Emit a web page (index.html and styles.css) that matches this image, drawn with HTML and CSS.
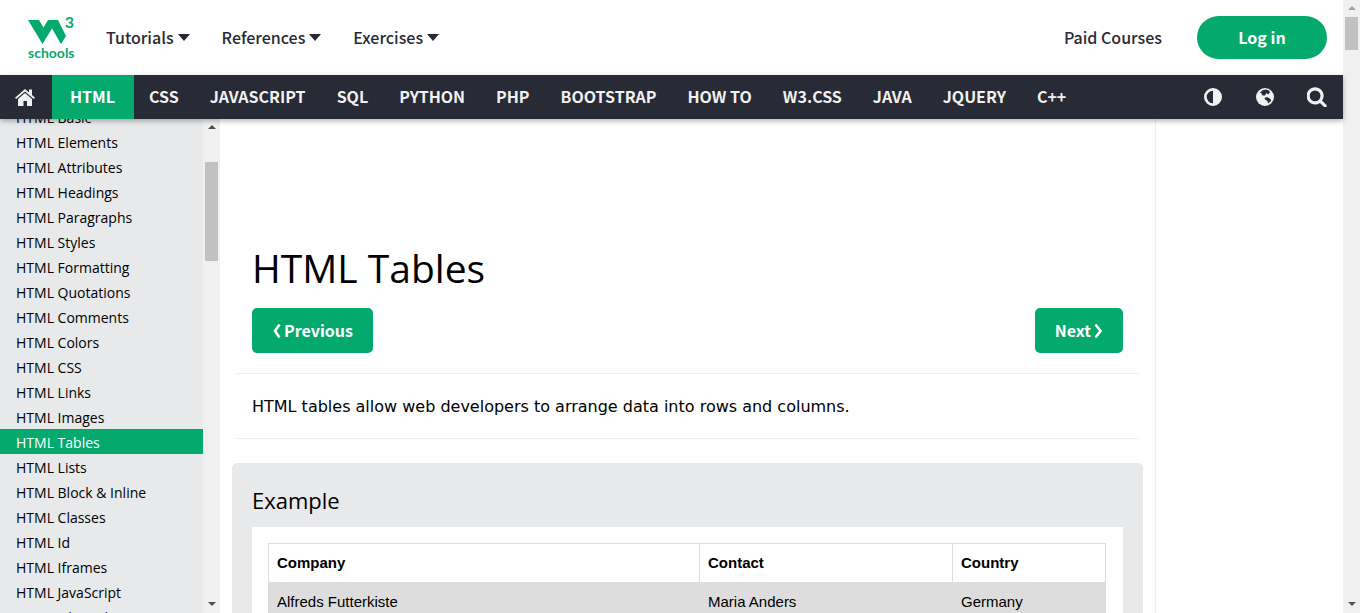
FILE: index.html
```
<!DOCTYPE html>
<html lang="en">
<head>
<meta charset="utf-8">
<title>HTML Tables</title>
<meta name="viewport" content="width=device-width, initial-scale=1">
<link rel="stylesheet" href="styles.css">
</head>
<body>
<div class="window">
<div class="page">
  <header class="top">
    <a class="logo" href="#" aria-label="W3Schools home">
      <svg class="logo-mark" viewBox="0 0 38 24" aria-hidden="true">
        <path d="M0 0H11L15.500 7.500L20 0H30L38 16L33 24L24 8.500L14.500 24Z"/>
      </svg>
      <span class="logo-three">3</span>
      <span class="logo-word">schools</span>
    </a>
    <nav class="menus" aria-label="Site">
      <a href="#">Tutorials<span class="caret"></span></a>
      <a href="#">References<span class="caret"></span></a>
      <a href="#">Exercises<span class="caret"></span></a>
    </nav>
    <a class="paid" href="#">Paid Courses</a>
    <button class="login" type="button">Log in</button>
  </header>

  <nav class="topics" aria-label="Topics">
    <a class="home" href="#" aria-label="Home">
      <svg class="icon-home" viewBox="0 0 20 17" aria-hidden="true"><path d="M10 4L17 10V17H12V12H8.500V17H3V10Z"/><path d="M10 0L14 3.500V0.500H17V6L20 8.800L18.800 10L10 2.500L1.200 10L0 8.800Z"/></svg>
    </a>
    <a class="active" href="#">HTML</a>
    <a href="#">CSS</a>
    <a href="#">JAVASCRIPT</a>
    <a href="#">SQL</a>
    <a href="#">PYTHON</a>
    <a href="#">PHP</a>
    <a href="#">BOOTSTRAP</a>
    <a href="#">HOW TO</a>
    <a href="#">W3.CSS</a>
    <a href="#">JAVA</a>
    <a href="#">JQUERY</a>
    <a href="#">C++</a>
    <div class="tools">
      <button type="button" aria-label="Dark mode"><svg viewBox="0 0 20 20" aria-hidden="true"><path fill-rule="evenodd" d="M10 1A9 9 0 1 0 10 19A9 9 0 1 0 10 1ZM10 3.700V16.300A6.300 6.300 0 0 1 10 3.700Z"/></svg></button>
      <button type="button" aria-label="Translate"><svg viewBox="0 0 20 20" aria-hidden="true"><circle cx="10" cy="10" r="9"/><path class="land" d="M5 5.500L8 3L11 2.500L14 3.500L15 5.500L13 7.500L11.500 6L10 8.500L7.500 8.500L6.500 6.500ZM9.500 11L12 10L15.500 12L16 14L13 16.500L12.500 14L10 12.500Z"/></svg></button>
      <button type="button" aria-label="Search"><svg viewBox="100 100 1650 1650" aria-hidden="true"><path d="M1216 832q0-185-131.500-316.500t-316.500-131.500-316.500 131.500-131.500 316.500 131.500 316.500 316.500 131.500 316.500-131.500 131.500-316.500zm512 832q0 52-38 90t-90 38q-54 0-90-38l-343-342q-179 124-399 124-143 0-273.500-55.500t-225-150-150-225-55.500-273.500 55.500-273.500 150-225 225-150 273.500-55.500 273.500 55.500 225 150 150 225 55.500 273.500q0 220-124 399l343 343q37 37 37 90z"/></svg></button>
    </div>
  </nav>

  <div class="body">
    <aside class="side">
      <nav class="chapters" aria-label="Chapters">
        <a href="#">HTML Basic</a>
        <a href="#">HTML Elements</a>
        <a href="#">HTML Attributes</a>
        <a href="#">HTML Headings</a>
        <a href="#">HTML Paragraphs</a>
        <a href="#">HTML Styles</a>
        <a href="#">HTML Formatting</a>
        <a href="#">HTML Quotations</a>
        <a href="#">HTML Comments</a>
        <a href="#">HTML Colors</a>
        <a href="#">HTML CSS</a>
        <a href="#">HTML Links</a>
        <a href="#">HTML Images</a>
        <a class="current" href="#" aria-current="page">HTML Tables</a>
        <a href="#">HTML Lists</a>
        <a href="#">HTML Block &amp; Inline</a>
        <a href="#">HTML Classes</a>
        <a href="#">HTML Id</a>
        <a href="#">HTML Iframes</a>
        <a href="#">HTML JavaScript</a>
        <a href="#">HTML File Paths</a>
      </nav>
      <div class="scrollbar" aria-hidden="true"><span class="up"></span><span class="thumb tall"></span><span class="down"></span></div>
    </aside>

    <main class="content">
      <h1>HTML Tables</h1>
      <div class="pager">
        <a class="btn" href="#"><svg viewBox="0 0 8 14" aria-hidden="true"><path d="M7 0.500L2.500 7L7 13.500"/></svg><span>Previous</span></a>
        <a class="btn" href="#"><span>Next</span><svg viewBox="0 0 8 14" aria-hidden="true"><path d="M1 0.500L6 7L1 13.500"/></svg></a>
      </div>
      <hr>
      <p>HTML tables allow web developers to arrange data into rows and columns.</p>
      <hr>
      <section class="example">
        <h2>Example</h2>
        <div class="sheet">
          <table>
            <colgroup><col class="c1"><col class="c2"><col class="c3"></colgroup>
            <thead><tr><th>Company</th><th>Contact</th><th>Country</th></tr></thead>
            <tbody><tr><td>Alfreds Futterkiste</td><td>Maria Anders</td><td>Germany</td></tr></tbody>
          </table>
        </div>
      </section>
    </main>
    <aside class="rail"></aside>
  </div>
</div>
<div class="scrollbar" aria-hidden="true"><span class="up muted"></span><span class="thumb"></span><span class="down"></span></div>
</div>
</body>
</html>
```
FILE: styles.css
```
* { box-sizing: border-box; }
body { margin: 0; background: #fff; color: #000; font-family: "Open Sans", sans-serif; }
a { color: inherit; text-decoration: none; }
button { border: 0; padding: 0; background: none; color: inherit; font: inherit; cursor: pointer; }

.window { display: flex; height: 100vh; overflow: hidden; }
.page { flex: 1; min-width: 0; display: flex; flex-direction: column; }

.top {
  display: flex; align-items: center; flex: none; height: 75px; padding: 0 16px 0 28px;
  color: #282a35; font: 500 16px/24px "Noto Sans CJK SC", sans-serif;
}
.logo { position: relative; width: 46px; height: 44px; color: #04aa6d; font-family: Lato, sans-serif; }
.logo-mark { display: block; width: 38px; height: 24px; margin-top: 4px; fill: #04aa6d; }
.logo-three { position: absolute; top: -3px; right: 0; font-size: 16px; font-weight: 700; line-height: 18px; }
.logo-word { display: block; font-size: 14px; font-weight: 700; line-height: 18px; }
.menus { display: flex; gap: 32px; margin-left: 32px; padding-bottom: 2px; }
.menus a { display: flex; align-items: center; gap: 4px; }
.caret { margin-top: 2px; border: 6px solid transparent; border-top: 7px solid #282a35; border-bottom: 0; }
.paid { margin-left: auto; padding-bottom: 2px; }
.login {
  width: 130px; height: 43px; margin-left: 35px; padding-bottom: 2px; border-radius: 22px;
  background: #04aa6d; color: #fff; font-weight: 700;
}

.topics {
  position: relative; z-index: 1; display: flex; flex: none; height: 44px;
  background: #282a35; color: #f1f1f1; box-shadow: 0 2px 5px rgba(0, 0, 0, .3);
  font: 700 16px/42px "Noto Sans CJK SC", sans-serif;
}
.topics a { padding: 0 16px 0 15px; }
.topics .home { display: flex; align-items: center; width: 52px; }
.topics .active { padding: 0 19px 0 18px; background: #04aa6d; color: #fff; }
.icon-home { width: 20px; height: 17px; fill: currentColor; }
.tools { display: flex; gap: 32px; margin-left: auto; padding-right: 16px; }
.tools button { display: flex; align-items: center; }
.tools svg { width: 20px; height: 20px; fill: currentColor; }
.tools .land { fill: #282a35; }

.body { display: flex; flex: 1; min-height: 0; }
.side { display: flex; flex: none; width: 220px; background: #e7e9eb; }
.chapters { display: flex; flex: 1; flex-direction: column; justify-content: flex-end; overflow: hidden; margin-bottom: -16px; font-size: 14px; line-height: 27px; }
.chapters a { flex: none; height: 25px; padding-left: 16px; }
.chapters .current { background: #04aa6d; color: #fff; }

.scrollbar { display: flex; flex: none; flex-direction: column; align-items: center; width: 17px; background: #f0f0f0; }
.scrollbar .up { margin: 6px 0 7px; border: 4px solid transparent; border-bottom-color: #505050; border-top: 0; }
.scrollbar .up.muted { border-bottom-color: #a3a3a3; }
.scrollbar .down { margin: auto 0 7px; border: 4px solid transparent; border-top-color: #505050; border-bottom: 0; }
.thumb { width: 13px; height: 33px; background: #c1c1c1; }
.thumb.tall { height: 99px; margin-top: 26px; }

.content { flex: 1; min-width: 0; padding: 117px 16px 0; overflow: hidden; }
h1 { margin: 0 16px; font-size: 39px; font-weight: 400; line-height: 63px; }
.pager { display: flex; justify-content: space-between; margin: 9px 16px 20px; }
.btn {
  display: flex; align-items: center; gap: 3px; height: 45px; padding: 0 20px; border-radius: 5px;
  background: #04aa6d; color: #fff; font: 700 16px/24px "Noto Sans CJK SC", sans-serif;
}
.btn span { padding-bottom: 2px; }
.btn svg { width: 9px; height: 14px; fill: none; stroke: #fff; stroke-width: 2.500; }
hr { height: 1px; margin: 0; border: 0; background: #eee; }
p { margin: 21px 16px 19px; font: 16px/24px "DejaVu Sans", sans-serif; }
.example { margin: 24px -4px 0; padding: 20px 20px 16px; border-radius: 5px; background: #e7e9eb; }
h2 { margin: 0 0 9px; font-size: 22px; font-weight: 400; line-height: 35px; }
.sheet { padding: 16px 17px 16px 16px; background: #fff; }
table { width: 100%; border-collapse: collapse; font: 15px/22px "Liberation Sans", sans-serif; table-layout: fixed; }
th, td { padding: 8px; border: 1px solid #ddd; text-align: left; }
tbody tr { background: #ddd; }
.c1 { width: 431px; }
.c2 { width: 253px; }
.rail { flex: none; width: 188px; border-left: 1px solid #eee; }
```
